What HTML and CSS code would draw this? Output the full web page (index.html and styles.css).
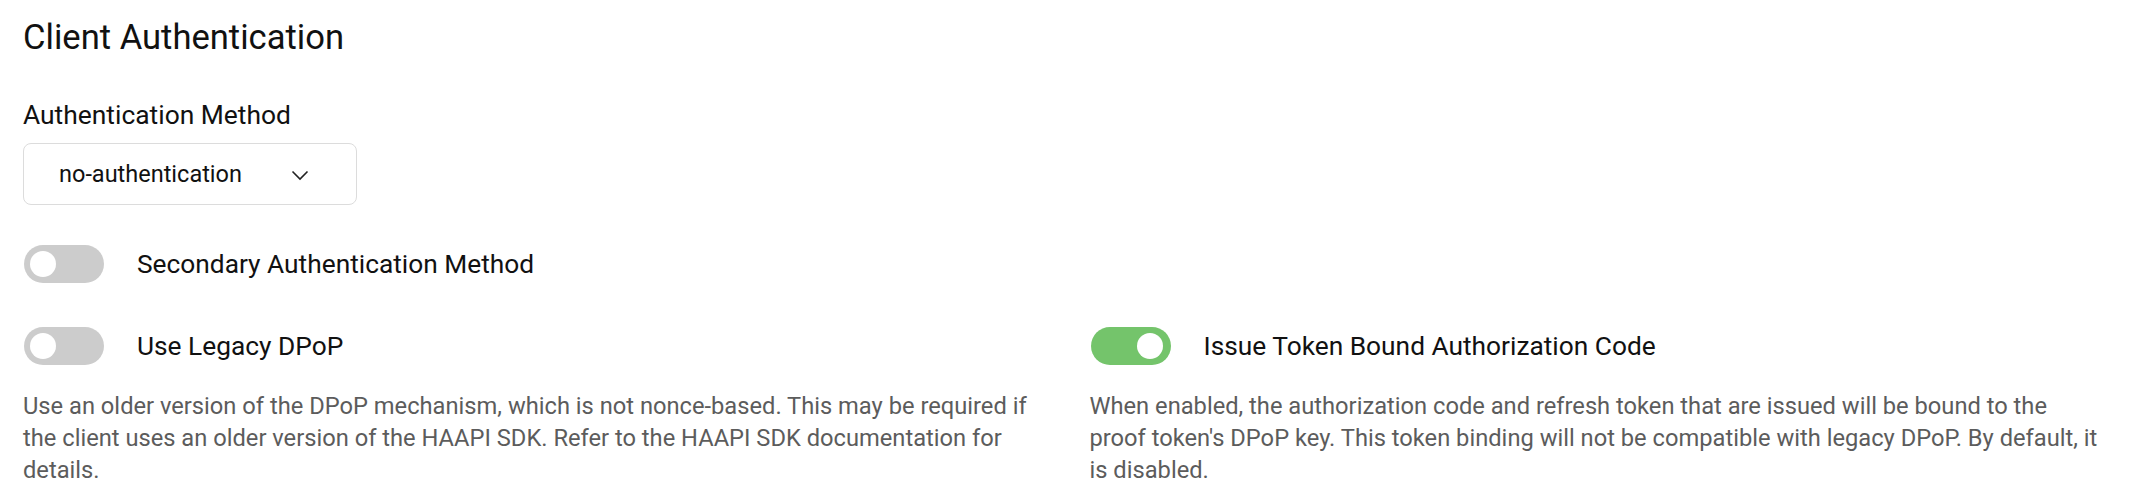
FILE: index.html
```html
<!DOCTYPE html>
<html lang="en">
<head>
  <meta charset="UTF-8">
  <title>Client Authentication</title>
  <link rel="stylesheet" href="styles.css">
</head>
<body>
  <div class="section">
    <h2>Client Authentication</h2>

    <div class="field">
      <label class="field-label">Authentication Method</label>
      <div class="select">
        <span>no-authentication</span>
        <svg class="chevron" width="18" height="11" viewBox="0 0 18 11">
          <polyline points="1.5,1.5 9,9 16.5,1.5" fill="none" stroke="#222" stroke-width="1.6"/>
        </svg>
      </div>
    </div>

    <div class="toggle-row single">
      <span class="switch"></span>
      <span class="toggle-label">Secondary Authentication Method</span>
    </div>

    <div class="columns">
      <div class="col">
        <div class="toggle-row">
          <span class="switch"></span>
          <span class="toggle-label">Use Legacy DPoP</span>
        </div>
        <p class="hint">Use an older version of the DPoP mechanism, which is not nonce-based. This may be required if the client uses an older version of the HAAPI SDK. Refer to the HAAPI SDK documentation for details.</p>
      </div>
      <div class="col">
        <div class="toggle-row">
          <span class="switch on"></span>
          <span class="toggle-label">Issue Token Bound Authorization Code</span>
        </div>
        <p class="hint">When enabled, the authorization code and refresh token that are issued will be bound to the proof token's DPoP key. This token binding will not be compatible with legacy DPoP. By default, it is disabled.</p>
      </div>
    </div>
  </div>
</body>
</html>
```

FILE: styles.css
```css
body {
  margin: 0;
  font-family: Roboto, "Noto Sans", Arial, sans-serif;
  background: #fff;
  color: #111;
}
.section {
  padding: 17px 24px 0 23px;
}
h2 {
  font-size: 34.6px;
  font-weight: 400;
  line-height: 40px;
  margin: 0 0 42px;
}
.field-label {
  display: block;
  font-size: 26.4px;
  line-height: 32px;
  margin-bottom: 12px;
}
.select {
  width: 334px;
  height: 62px;
  box-sizing: border-box;
  border: 1px solid #dcdcdc;
  border-radius: 8px;
  display: flex;
  align-items: center;
  justify-content: space-between;
  padding: 0 47px 0 35px;
  font-size: 23.5px;
}
.chevron {
  margin-top: 2px;
}
.toggle-row {
  display: flex;
  align-items: center;
  gap: 33px;
  height: 38px;
}
.toggle-row.single {
  margin: 40px 0 44px 1px;
}
.toggle-label {
  font-size: 26.3px;
}
.switch {
  position: relative;
  flex: none;
  width: 80px;
  height: 38px;
  border-radius: 19px;
  background: #cccccc;
}
.switch::after {
  content: "";
  position: absolute;
  top: 6px;
  left: 6px;
  width: 26px;
  height: 26px;
  border-radius: 50%;
  background: #fff;
}
.switch.on {
  background: #74c46b;
}
.switch.on::after {
  left: auto;
  right: 8px;
}
.columns {
  display: grid;
  grid-template-columns: 1fr 1fr;
  column-gap: 48px;
}
.col .toggle-row {
  margin-left: 1px;
}
.hint {
  margin: 25px 0 0;
  font-size: 23.7px;
  line-height: 32px;
  color: #5c5c5c;
}
```
